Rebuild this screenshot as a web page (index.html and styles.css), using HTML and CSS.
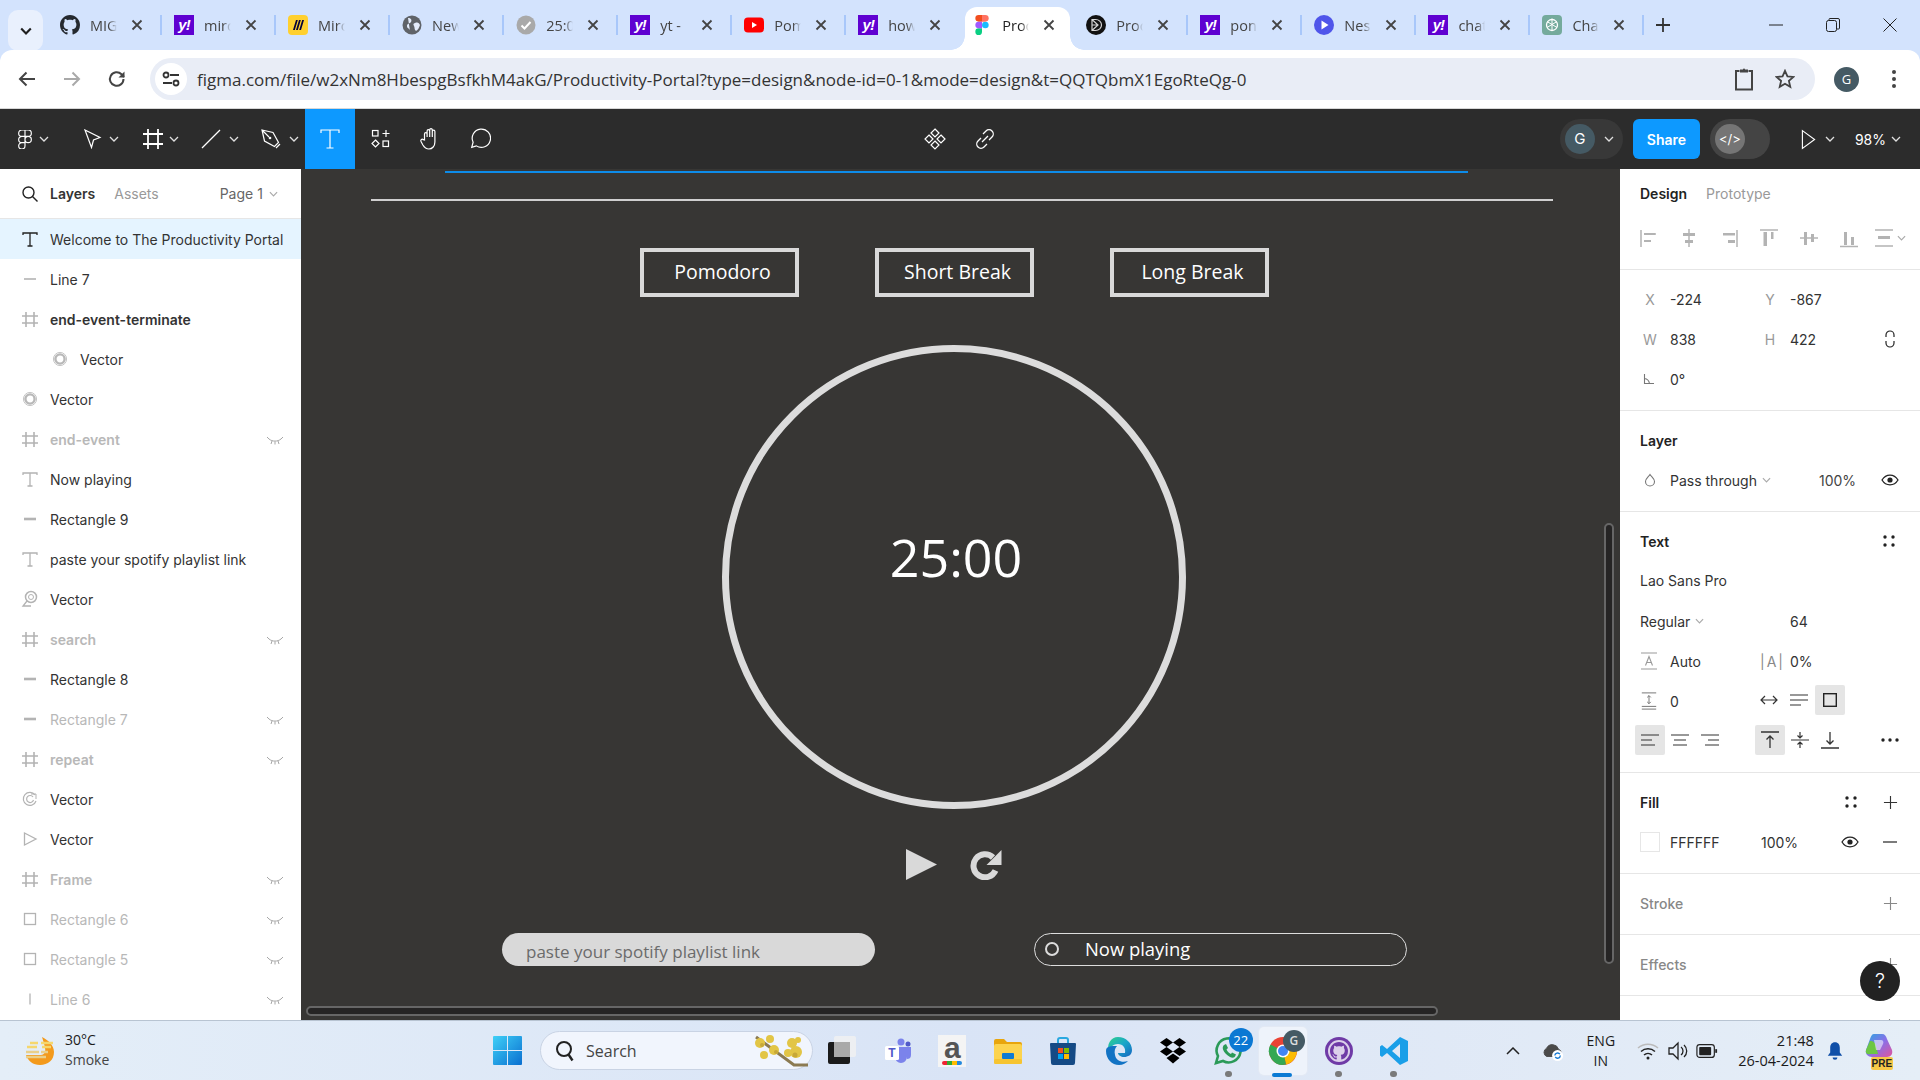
FILE: index.html
```html
<!DOCTYPE html>
<html lang="en">
<head>
<meta charset="utf-8">
<title>Productivity Portal – Figma</title>
<link rel="stylesheet" href="styles.css">
</head>
<body>
<svg class="defs" width="0" height="0" aria-hidden="true">
  <symbol id="x" viewBox="0 0 12 12"><path d="M1.500 1.500l9 9M10.500 1.500l-9 9" fill="none" stroke="currentColor" stroke-width="1.800"/></symbol>
  <symbol id="gh" viewBox="0 0 16 16"><path d="M8 0C3.58 0 0 3.58 0 8c0 3.54 2.29 6.53 5.47 7.59.4.07.55-.17.55-.38 0-.19-.01-.82-.01-1.49-2.01.37-2.53-.49-2.69-.94-.09-.23-.48-.94-.82-1.13-.28-.15-.68-.52-.01-.53.63-.01 1.08.58 1.23.82.72 1.21 1.87.87 2.33.66.07-.52.28-.87.51-1.07-1.78-.2-3.64-.89-3.64-3.95 0-.87.31-1.59.82-2.15-.08-.2-.36-1.02.08-2.12 0 0 .67-.21 2.2.82.64-.18 1.32-.27 2-.27.68 0 1.36.09 2 .27 1.53-1.04 2.2-.82 2.2-.82.44 1.1.16 1.92.08 2.12.51.56.82 1.27.82 2.15 0 3.07-1.87 3.75-3.65 3.95.29.25.54.73.54 1.48 0 1.07-.01 1.93-.01 2.2 0 .21.15.46.55.38A8.013 8.013 0 0016 8c0-4.42-3.58-8-8-8z" fill="currentColor"/></symbol>
  <symbol id="chev" viewBox="0 0 10 6"><path d="M1 1l4 4 4-4" fill="none" stroke="currentColor" stroke-width="1.300"/></symbol>
  <symbol id="eye-off" viewBox="0 0 18 10"><path d="M3 3c3.400 2.800 8.600 2.800 12 0M1 1l2 2M17 1l-2 2M6 5l-1 3M12 5l1 3M9 5.500v3" fill="none" stroke="#a6a6a6" stroke-width="1"/></symbol>
  <symbol id="hash" viewBox="0 0 20 20"><path d="M6 3v15M14 3v15M2 7h16M2 14h16" fill="none" stroke="#b3b3b3" stroke-width="1.600"/></symbol>
  <symbol id="ltext" viewBox="0 0 20 20"><path d="M3 6V4h14v2M10 4v13M7.500 17h5" fill="none" stroke="#b3b3b3" stroke-width="1.300"/></symbol>
  <symbol id="ltext-d" viewBox="0 0 20 20"><path d="M3 6V4h14v2M10 4v13M7.500 17h5" fill="none" stroke="#222" stroke-width="1.300"/></symbol>
  <symbol id="ldash" viewBox="0 0 20 20"><path d="M4 10h12" stroke="#b3b3b3" stroke-width="1.600"/></symbol>
  <symbol id="lbar" viewBox="0 0 20 20"><path d="M4 10h12" stroke="#b3b3b3" stroke-width="2.600"/></symbol>
  <symbol id="lring" viewBox="0 0 20 20"><circle cx="10" cy="10" r="4.600" fill="none" stroke="#b8b8b8" stroke-width="2.400"/><circle cx="10" cy="10" r="6.600" fill="none" stroke="#c6c6c6" stroke-width="1"/></symbol>
  <symbol id="lbox" viewBox="0 0 20 20"><rect x="4.500" y="4.500" width="11" height="11" fill="none" stroke="#b3b3b3" stroke-width="1.300"/></symbol>
  <symbol id="eye" viewBox="0 0 18 12"><path d="M1 6c4-6.500 12-6.500 16 0-4 6.500-12 6.500-16 0z" fill="none" stroke="#222" stroke-width="1.300"/><circle cx="9" cy="6" r="2.600" fill="#222"/></symbol>
  <symbol id="plus" viewBox="0 0 16 16"><path d="M8 1v14M1 8h14" stroke="currentColor" stroke-width="1.200"/></symbol>
  <symbol id="dots4" viewBox="0 0 12 12"><circle cx="2" cy="2" r="1.700"/><circle cx="10" cy="2" r="1.700"/><circle cx="2" cy="10" r="1.700"/><circle cx="10" cy="10" r="1.700"/></symbol>
</svg>

<header class="tabbar">
  <button class="tab-list"><svg class="tab-list-ic" viewBox="0 0 10 6"><path d="M1 1l4 4 4-4" fill="none" stroke="#1f1f1f" stroke-width="1.800"/></svg></button>
  <div class="tabs">
    <div class="tab sep"><svg class="fav dark"><use href="#gh"/></svg><span class="tab-t">MIG</span><svg class="tab-x"><use href="#x"/></svg></div>
    <div class="tab sep"><span class="fav yahoo">y!</span><span class="tab-t">mirc</span><svg class="tab-x"><use href="#x"/></svg></div>
    <div class="tab sep"><svg class="fav" viewBox="0 0 20 20"><rect width="20" height="20" rx="4" fill="#ffd02f"/><path d="M8 5l-3 10h1.800l3-10zM11 5l-3 10h1.800l3-10zM14.200 5l-3 10H13l3-10z" fill="#050038"/></svg><span class="tab-t">Mirc</span><svg class="tab-x"><use href="#x"/></svg></div>
    <div class="tab sep"><svg class="fav" viewBox="0 0 20 20"><circle cx="10" cy="10" r="9.500" fill="#5f6368"/><path d="M6 3c3 0 4 2 3 4S5 8 5 11s3 2 3 5M13 8c3-1 4 0 5 2-1 3-2 5-4 6-2-2-1-3-2-5s-1-2 1-3z" fill="#e4ecfb"/></svg><span class="tab-t">New</span><svg class="tab-x"><use href="#x"/></svg></div>
    <div class="tab sep"><svg class="fav" viewBox="0 0 20 20"><circle cx="10" cy="10" r="9.500" fill="#a9a9a9"/><path d="M5.500 10.500l3 3 6-6.500" fill="none" stroke="#fff" stroke-width="2"/></svg><span class="tab-t">25:0</span><svg class="tab-x"><use href="#x"/></svg></div>
    <div class="tab sep"><span class="fav yahoo">y!</span><span class="tab-t">yt -</span><svg class="tab-x"><use href="#x"/></svg></div>
    <div class="tab sep"><svg class="fav" viewBox="0 0 20 20"><rect y="2.500" width="20" height="15" rx="4" fill="#f00"/><path d="M8 7l5 3-5 3z" fill="#fff"/></svg><span class="tab-t">Pom</span><svg class="tab-x"><use href="#x"/></svg></div>
    <div class="tab"><span class="fav yahoo">y!</span><span class="tab-t">how</span><svg class="tab-x"><use href="#x"/></svg></div>
    <div class="tab active"><svg class="fav" viewBox="0 0 38 57"><path fill="#1abcfe" d="M19 28.500a9.500 9.500 0 1 1 19 0 9.500 9.500 0 0 1-19 0z"/><path fill="#0acf83" d="M0 47.500A9.500 9.500 0 0 1 9.500 38H19v9.500a9.500 9.500 0 1 1-19 0z"/><path fill="#ff7262" d="M19 0v19h9.500a9.500 9.500 0 1 0 0-19H19z"/><path fill="#f24e1e" d="M0 9.500A9.500 9.500 0 0 0 9.500 19H19V0H9.500A9.500 9.500 0 0 0 0 9.500z"/><path fill="#a259ff" d="M0 28.500A9.500 9.500 0 0 0 9.500 38H19V19H9.500A9.500 9.500 0 0 0 0 28.500z"/></svg><span class="tab-t">Proc</span><svg class="tab-x"><use href="#x"/></svg></div>
    <div class="tab sep"><svg class="fav" viewBox="0 0 20 20"><circle cx="10" cy="10" r="10" fill="#111"/><path d="M6 4.500h3.500C13 4.500 15.500 7 15.500 10S13 15.500 9.500 15.500H6zM6 4.500L12 10l-6 5.500M6 10h6" fill="none" stroke="#d5d5d5" stroke-width="1.200"/></svg><span class="tab-t">Proc</span><svg class="tab-x"><use href="#x"/></svg></div>
    <div class="tab sep"><span class="fav yahoo">y!</span><span class="tab-t">pon</span><svg class="tab-x"><use href="#x"/></svg></div>
    <div class="tab sep"><svg class="fav" viewBox="0 0 20 20"><circle cx="10" cy="10" r="10" fill="#4f55ea"/><path d="M7.500 5.500l7 4.500-7 4.500z" fill="#fff"/></svg><span class="tab-t">Nes</span><svg class="tab-x"><use href="#x"/></svg></div>
    <div class="tab sep"><span class="fav yahoo">y!</span><span class="tab-t">chat</span><svg class="tab-x"><use href="#x"/></svg></div>
    <div class="tab sep"><svg class="fav" viewBox="0 0 20 20"><rect width="20" height="20" rx="4" fill="#74aa9c"/><circle cx="10" cy="10" r="5.500" fill="none" stroke="#fff" stroke-width="1.300"/><path d="M10 3.500v6l5 3M5 6.500l5 3v6M15 6.500l-5 3-5 3" fill="none" stroke="#fff" stroke-width="1"/></svg><span class="tab-t">Cha</span><svg class="tab-x"><use href="#x"/></svg></div>
  </div>
  <svg class="new-tab" viewBox="0 0 14 14"><path d="M7 0v14M0 7h14" stroke="#333" stroke-width="1.800"/></svg>
  <div class="win-ctrls">
    <svg class="win-ic" viewBox="0 0 14 14"><path d="M0 7h14" stroke="#222" stroke-width="1"/></svg>
    <svg class="win-ic" viewBox="0 0 14 14"><rect x=".5" y="2.500" width="10" height="11" rx="2" fill="none" stroke="#222"/><path d="M3 2.500v-1a1 1 0 0 1 1-1h8a1.500 1.500 0 0 1 1.500 1.500v8a1 1 0 0 1-1 1h-2" fill="none" stroke="#222"/></svg>
    <svg class="win-ic" viewBox="0 0 14 14"><path d="M.5.500l13 13M13.500.500l-13 13" stroke="#222" stroke-width="1"/></svg>
  </div>
</header>

<nav class="addrbar">
  <svg class="nav-ic" viewBox="0 0 20 20"><path d="M18 10H3M9.500 3.500L3 10l6.500 6.500" fill="none" stroke="#444" stroke-width="2"/></svg>
  <svg class="nav-ic" viewBox="0 0 20 20"><path d="M2 10h15M10.500 3.500L17 10l-6.500 6.500" fill="none" stroke="#a9a9a9" stroke-width="2"/></svg>
  <svg class="nav-ic" viewBox="0 0 20 20"><path d="M16.500 10a6.800 6.800 0 1 1-2-4.800L17 8" fill="none" stroke="#444" stroke-width="2"/><path d="M17.500 2.500v6h-6z" fill="#444"/></svg>
  <div class="url">
    <span class="site-ic"><svg viewBox="0 0 18 18" width="18" height="18"><path d="M8 5h9M1 13h9" stroke="#333" stroke-width="1.800"/><circle cx="4" cy="5" r="2.500" fill="none" stroke="#333" stroke-width="1.800"/><circle cx="14" cy="13" r="2.500" fill="none" stroke="#333" stroke-width="1.800"/></svg></span>
    <span class="url-t">figma.com/file/w2xNm8HbespgBsfkhM4akG/Productivity-Portal?type=design&amp;node-id=0-1&amp;mode=design&amp;t=QQTQbmX1EgoRteQg-0</span>
    <svg class="clip-ic" viewBox="0 0 20 24"><path d="M5.500 4H2v18.500h16V4h-3.500" fill="none" stroke="#444" stroke-width="2"/><path d="M6 5.500V2.500h3a1 1 0 0 1 2 0h3v3z" fill="#444"/></svg>
    <svg class="star-ic" viewBox="0 0 22 22"><path d="M11 2l2.700 6.100 6.600.6-5 4.400 1.500 6.500L11 16.200l-5.800 3.400 1.500-6.500-5-4.400 6.600-.6z" fill="none" stroke="#444" stroke-width="2"/></svg>
  </div>
  <span class="avatar-g">G</span>
  <svg class="kebab" viewBox="0 0 4 18"><circle cx="2" cy="2" r="2" fill="#444"/><circle cx="2" cy="9" r="2" fill="#444"/><circle cx="2" cy="16" r="2" fill="#444"/></svg>
</nav>

<div class="toolbar">
  <div class="tb-tools">
    <div class="tool w-fig"><svg class="ic-fig" viewBox="0 0 38 57"><path fill="none" stroke="#fff" stroke-width="3.500" d="M19 28.500a9.500 9.500 0 1 1 19 0 9.500 9.500 0 0 1-19 0zM0 47.500A9.500 9.500 0 0 1 9.500 38H19v9.500a9.500 9.500 0 1 1-19 0zM19 0v19h9.500a9.500 9.500 0 1 0 0-19H19zM0 9.500A9.500 9.500 0 0 0 9.500 19H19V0H9.500A9.500 9.500 0 0 0 0 9.500zM0 28.500A9.500 9.500 0 0 0 9.500 38H19V19H9.500A9.500 9.500 0 0 0 0 28.500z"/></svg><svg class="tchev"><use href="#chev"/></svg></div>
    <div class="tool w-move"><svg class="ic20" viewBox="0 0 20 20"><path d="M3 1l15 7.500-6.500 2.500-2 7.500z" fill="none" stroke="#fff" stroke-width="1.200"/></svg><svg class="tchev"><use href="#chev"/></svg></div>
    <div class="tool w-frame"><svg class="ic20" viewBox="0 0 20 20"><path d="M5 0v20M15 0v20M0 5h20M0 15h20" stroke="#fff" stroke-width="1.800" fill="none"/></svg><svg class="tchev"><use href="#chev"/></svg></div>
    <div class="tool w-line"><svg class="ic20" viewBox="0 0 20 20"><path d="M1 19L19 1" stroke="#fff" stroke-width="1.200"/></svg><svg class="tchev"><use href="#chev"/></svg></div>
    <div class="tool w-pen"><svg class="ic20" viewBox="0 0 20 20"><path d="M1 1l11 2.500 5.500 10-4 4-10-5.500zM1 1l7 7M19 15l-4 4" fill="none" stroke="#fff" stroke-width="1.200"/><circle cx="9" cy="9" r="1.300" fill="#fff"/></svg><svg class="tchev"><use href="#chev"/></svg></div>
    <div class="tool-text"><svg class="ic20" viewBox="0 0 20 20"><path d="M1 4V1h18v3M10 1v18M6.500 19h7" fill="none" stroke="#fff" stroke-width="1.200"/></svg></div>
    <div class="tool w-res"><svg class="ic20" viewBox="0 0 20 20"><rect x="1.500" y="1.500" width="5.500" height="5.500" fill="none" stroke="#fff" stroke-width="1.200"/><path d="M15 1v7M11.500 4.500h7" stroke="#fff" stroke-width="1.200"/><path d="M4.500 11l3.500 3.500-3.500 3.500L1 14.500z" fill="none" stroke="#fff" stroke-width="1.200"/><rect x="12" y="12" width="5.500" height="5.500" fill="none" stroke="#fff" stroke-width="1.200"/></svg></div>
    <div class="tool w-hand"><svg class="ic24" viewBox="0 0 24 24"><path d="M6.500 13V7a1.300 1.300 0 0 1 2.600 0v3-6a1.300 1.300 0 0 1 2.600 0v6-7a1.300 1.300 0 0 1 2.600 0v7-5.500a1.300 1.300 0 0 1 2.600 0v10.500c0 4-2.500 7-6 7-3 0-4.500-1.500-6-4L3 14.500c-.8-1.500 1-3 2.300-1.800z" fill="none" stroke="#fff" stroke-width="1.200"/></svg></div>
    <div class="tool w-comment"><svg class="ic22" viewBox="0 0 24 24"><path d="M3 21l1.500-5.500A10 10 0 1 1 8 19.500z" fill="none" stroke="#fff" stroke-width="1.300"/></svg></div>
  </div>
  <div class="tb-center">
    <svg class="ic24" viewBox="0 0 24 24"><path d="M12 1l4 4-4 4-4-4zM6 7l4 4-4 4-4-4zM18 7l4 4-4 4-4-4zM12 13l4 4-4 4-4-4z" transform="translate(0 1)" fill="none" stroke="#fff" stroke-width="1.200"/></svg>
    <svg class="ic20 link-ic" viewBox="0 0 20 20"><path d="M8 5l3-3a4 4 0 0 1 6 6l-3 3M12 15l-3 3a4 4 0 0 1-6-6l3-3M7 13l6-6" fill="none" stroke="#fff" stroke-width="1.300"/></svg>
  </div>
  <div class="tb-right">
    <div class="user-pill"><span class="user-av">G</span><svg class="tchev"><use href="#chev"/></svg></div>
    <button class="share">Share</button>
    <div class="dev-toggle"><span class="dev-knob">&lt;/&gt;</span></div>
    <svg class="play-ic" viewBox="0 0 16 22"><path d="M1.500 1.500L14.500 11 1.500 20.500z" fill="none" stroke="#fff" stroke-width="1.200"/></svg>
    <svg class="tchev"><use href="#chev"/></svg>
    <span class="zoom-val">98%</span>
    <svg class="tchev"><use href="#chev"/></svg>
  </div>
</div>

<main class="main">
  <aside class="left">
    <div class="left-head">
      <svg class="ic16" viewBox="0 0 16 16"><circle cx="6.500" cy="6.500" r="5.500" fill="none" stroke="#222" stroke-width="1.400"/><path d="M10.500 10.500L15.500 15.500" stroke="#222" stroke-width="1.400"/></svg>
      <span class="lh-active">Layers</span>
      <span class="lh-muted">Assets</span>
      <span class="lh-page">Page 1</span>
      <svg class="pchev"><use href="#chev"/></svg>
    </div>
    <ul class="layers">
      <li class="row sel"><svg class="lic"><use href="#ltext-d"/></svg>Welcome to The Productivity Portal</li>
      <li class="row"><svg class="lic"><use href="#ldash"/></svg>Line 7</li>
      <li class="row strong"><svg class="lic"><use href="#hash"/></svg>end-event-terminate</li>
      <li class="row nested"><svg class="lic"><use href="#lring"/></svg>Vector</li>
      <li class="row"><svg class="lic"><use href="#lring"/></svg>Vector</li>
      <li class="row hid strong"><svg class="lic"><use href="#hash"/></svg>end-event<svg class="eye-off"><use href="#eye-off"/></svg></li>
      <li class="row"><svg class="lic"><use href="#ltext"/></svg>Now playing</li>
      <li class="row"><svg class="lic"><use href="#lbar"/></svg>Rectangle 9</li>
      <li class="row"><svg class="lic"><use href="#ltext"/></svg>paste your spotify playlist link</li>
      <li class="row"><svg class="lic" viewBox="0 0 20 20"><circle cx="11" cy="8" r="5.500" fill="none" stroke="#b3b3b3" stroke-width="1.500"/><circle cx="11" cy="8" r="2.500" fill="none" stroke="#b3b3b3"/><path d="M7 12l-4 5h8" fill="none" stroke="#b3b3b3" stroke-width="1.300"/></svg>Vector</li>
      <li class="row hid strong"><svg class="lic"><use href="#hash"/></svg>search<svg class="eye-off"><use href="#eye-off"/></svg></li>
      <li class="row"><svg class="lic"><use href="#lbar"/></svg>Rectangle 8</li>
      <li class="row hid"><svg class="lic"><use href="#lbar"/></svg>Rectangle 7<svg class="eye-off"><use href="#eye-off"/></svg></li>
      <li class="row hid strong"><svg class="lic"><use href="#hash"/></svg>repeat<svg class="eye-off"><use href="#eye-off"/></svg></li>
      <li class="row"><svg class="lic" viewBox="0 0 20 20"><path d="M15 6a6.500 6.500 0 1 0 1 6M13 8a3.500 3.500 0 1 0 .5 3" fill="none" stroke="#b3b3b3" stroke-width="1.200"/><path d="M11 5l5 0 0 5" fill="none" stroke="#b3b3b3" stroke-width="1"/></svg>Vector</li>
      <li class="row"><svg class="lic" viewBox="0 0 20 20"><path d="M4.500 4l11.500 6-11.500 6z" fill="none" stroke="#b3b3b3" stroke-width="1.300"/></svg>Vector</li>
      <li class="row hid strong"><svg class="lic"><use href="#hash"/></svg>Frame<svg class="eye-off"><use href="#eye-off"/></svg></li>
      <li class="row hid"><svg class="lic"><use href="#lbox"/></svg>Rectangle 6<svg class="eye-off"><use href="#eye-off"/></svg></li>
      <li class="row hid"><svg class="lic"><use href="#lbox"/></svg>Rectangle 5<svg class="eye-off"><use href="#eye-off"/></svg></li>
      <li class="row hid"><svg class="lic" viewBox="0 0 20 20"><path d="M10 4.500v11" stroke="#b3b3b3" stroke-width="1.300"/></svg>Line 6<svg class="eye-off"><use href="#eye-off"/></svg></li>
    </ul>
  </aside>

  <section class="canvas">
    <div class="c-blue"></div>
    <div class="c-rule"></div>
    <div class="c-modes">
      <span class="c-mode">Pomodoro</span>
      <span class="c-mode">Short Break</span>
      <span class="c-mode">Long Break</span>
    </div>
    <div class="c-ring"></div>
    <div class="c-time">25:00</div>
    <svg class="c-play" viewBox="0 0 31 31"><path d="M0 0l31 15.500L0 31z" fill="#d9d9d9"/></svg>
    <svg class="c-repeat" viewBox="0 0 33 30"><path d="M26.500 20.500A11.500 11.500 0 1 1 24 7.500" fill="none" stroke="#d9d9d9" stroke-width="6"/><path d="M32.500 0v15h-15z" fill="#d9d9d9"/></svg>
    <div class="c-input">paste your spotify playlist link</div>
    <div class="c-now"><span class="c-now-dot"></span>Now playing</div>
    <div class="c-vscroll"></div>
    <div class="c-hscroll"></div>
  </section>

  <aside class="right">
    <div class="sec sec-head">
      <div class="rt-tabs"><span class="rt-active">Design</span><span class="rt-muted">Prototype</span></div>
      <div class="aligns">
        <svg class="al" viewBox="0 0 20 20"><path d="M2 2v17M5 6h12M5 13h7" fill="none" stroke="#b3b3b3" stroke-width="1.500"/><path d="M5 5v2h11V5zM5 12v2h7v-2z" fill="#b3b3b3"/></svg>
        <svg class="al" viewBox="0 0 20 20"><path d="M10 1v18" stroke="#b3b3b3" stroke-width="1.500"/><path d="M4 5h12v3H4zM6 12h8v3H6z" fill="#b3b3b3"/></svg>
        <svg class="al" viewBox="0 0 20 20"><path d="M18 2v17" stroke="#b3b3b3" stroke-width="1.500"/><path d="M4 5h12v2.500H4zM9 12h7v3H9z" fill="#b3b3b3"/></svg>
        <svg class="al" viewBox="0 0 20 20"><path d="M1 2h18" stroke="#b3b3b3" stroke-width="1.500"/><path d="M4.500 4H8v14H4.500zM12 4h2.500v7H12z" fill="#b3b3b3"/></svg>
        <svg class="al" viewBox="0 0 20 20"><path d="M1 10h18" stroke="#b3b3b3" stroke-width="1.500"/><path d="M5 4h3v13H5zM12 6h3v8h-3z" fill="#b3b3b3"/></svg>
        <svg class="al" viewBox="0 0 20 20"><path d="M1 18.500h18" stroke="#b3b3b3" stroke-width="1.500"/><path d="M5 4h3v13H5zM12 9h3v8h-3z" fill="#b3b3b3"/></svg>
        <svg class="al" viewBox="0 0 20 20"><path d="M1 2h18M1 18h18" stroke="#b3b3b3" stroke-width="1.500"/><path d="M4 8h12v3H4z" fill="#b3b3b3"/></svg>
        <svg class="pchev al-chev"><use href="#chev"/></svg>
      </div>
    </div>

    <div class="sec sec-geo">
      <div class="pr"><span class="lbl">X</span><span>-224</span><span class="lbl">Y</span><span>-867</span></div>
      <div class="pr"><span class="lbl">W</span><span>838</span><span class="lbl">H</span><span>422</span><span></span><svg class="ic-con" viewBox="0 0 10 18"><path d="M1 7V5a4 4 0 0 1 8 0v2M1 11v2a4 4 0 0 0 8 0v-2" fill="none" stroke="#222" stroke-width="1.200"/></svg></div>
      <div class="pr"><svg class="ic-ang" viewBox="0 0 12 12"><path d="M1.500 1v9.500H11M1.500 5.500c2.500.3 4.500 2.300 5 5" fill="none" stroke="#777" stroke-width="1.100"/></svg><span>0°</span></div>
    </div>

    <div class="sec sec-pad">
      <div class="pr-title"><strong>Layer</strong></div>
      <div class="pr">
        <svg class="ic-drop" viewBox="0 0 12 14"><path d="M6 1.500C4.500 4 1.500 5.800 1.500 8.500a4.500 4.500 0 0 0 9 0C10.500 5.800 7.500 4 6 1.500z" fill="none" stroke="#777" stroke-width="1.100"/></svg>
        <span class="span-blend">Pass through<svg class="pchev blend-chev"><use href="#chev"/></svg></span>
        <span class="pct-layer">100%</span>
        <svg class="ic-eye eye-layer"><use href="#eye"/></svg>
      </div>
    </div>

    <div class="sec sec-text">
      <div class="pr-title"><strong>Text</strong><svg class="ic-dots"><use href="#dots4"/></svg></div>
      <div class="pr-title pr-font-name">Lao Sans Pro</div>
      <div class="pr pr-font"><span class="font-wt">Regular<svg class="pchev blend-chev"><use href="#chev"/></svg></span><span class="font-size">64</span></div>
      <div class="pr">
        <svg class="ic18" viewBox="0 0 18 18"><path d="M1 1h16M1 17h16M5.500 13.500L9 4.500l3.500 9M6.700 10.500h4.600" fill="none" stroke="#999" stroke-width="1.100"/></svg><span>Auto</span>
        <span class="ic-ls">|A|</span><span>0%</span>
      </div>
      <div class="pr">
        <svg class="ic18" viewBox="0 0 18 20"><path d="M1 1h16M1 16h16M1 19h16M9 4v9M7 6l2-2 2 2M7 11l2 2 2-2" fill="none" stroke="#777" stroke-width="1.100"/></svg><span>0</span>
        <svg class="ic18 resize-first" viewBox="0 0 18 12"><path d="M1 6h16M5 2L1 6l4 4M13 2l4 4-4 4" fill="none" stroke="#333" stroke-width="1.200"/></svg>
        <div class="resize-group">
          <svg class="ic18" viewBox="0 0 18 12"><path d="M0 1h18M0 6h18M0 11h11" fill="none" stroke="#333" stroke-width="1.200"/></svg>
          <span class="toggle-on"><svg class="ic14" viewBox="0 0 14 14"><rect x=".7" y=".7" width="12.600" height="12.600" fill="none" stroke="#222" stroke-width="1.400"/></svg></span>
        </div>
      </div>
      <div class="pr-aligns">
        <span class="cell on"><svg class="ic18" viewBox="0 0 18 12"><path d="M0 1h18M0 6h11M0 11h14" fill="none" stroke="#333" stroke-width="1.200"/></svg></span>
        <span class="cell"><svg class="ic18" viewBox="0 0 18 12"><path d="M0 1h18M3 6h12M2 11h14" fill="none" stroke="#333" stroke-width="1.200"/></svg></span>
        <span class="cell"><svg class="ic18" viewBox="0 0 18 12"><path d="M0 1h18M7 6h11M4 11h14" fill="none" stroke="#333" stroke-width="1.200"/></svg></span>
        <span class="cell-gap"></span>
        <span class="cell on"><svg class="ic18 tall" viewBox="0 0 18 18"><path d="M0 1h18M9 17V5M5.500 8.500L9 5l3.500 3.500" fill="none" stroke="#333" stroke-width="1.300"/></svg></span>
        <span class="cell"><svg class="ic18 tall" viewBox="0 0 18 18"><path d="M0 9h18M9 1v6M6.500 4.500L9 7l2.500-2.500M9 17v-6M6.500 13.500L9 11l2.500 2.500" fill="none" stroke="#333" stroke-width="1.200"/></svg></span>
        <span class="cell"><svg class="ic18 tall" viewBox="0 0 18 18"><path d="M0 17h18M9 1v12M5.500 9.500L9 13l3.500-3.500" fill="none" stroke="#333" stroke-width="1.300"/></svg></span>
        <svg class="ic-more" viewBox="0 0 18 4"><circle cx="2" cy="2" r="1.700"/><circle cx="9" cy="2" r="1.700"/><circle cx="16" cy="2" r="1.700"/></svg>
      </div>
    </div>

    <div class="sec sec-pad">
      <div class="pr-title"><strong>Fill</strong><span class="title-tools"><svg class="ic-dots"><use href="#dots4"/></svg><svg class="ic-plus"><use href="#plus"/></svg></span></div>
      <div class="pr pr-fill">
        <span class="swatch"></span><span class="fill-hex">FFFFFF</span><span class="fill-pct">100%</span>
        <svg class="ic-eye"><use href="#eye"/></svg>
        <svg class="ic-minus" viewBox="0 0 14 2"><path d="M0 1h14" stroke="#222" stroke-width="1.200"/></svg>
      </div>
    </div>
    <div class="sec sec-one"><div class="pr-title muted">Stroke<svg class="ic-plus grey"><use href="#plus"/></svg></div></div>
    <div class="sec sec-one"><div class="pr-title muted">Effects<svg class="ic-plus grey"><use href="#plus"/></svg></div></div>
    <div class="sec-last"><svg class="ic-plus grey"><use href="#plus"/></svg></div>
    <div class="help">?</div>
  </aside>
</main>

<footer class="taskbar">
  <div class="tk-left">
    <svg class="weather" viewBox="0 0 30 28"><path d="M17 0c6 3 12 8 12 15 0 8-6 13-14 13C8 28 3 24 1 18h15c3 0 5-3 4-7-.6-4-2-8-3-11z" fill="#f39a1c"/><path d="M5 6h8M2 10h10M16 6h12M17 10h9" stroke="#f5d76e" stroke-width="2.500"/><path d="M1 15h13M1 20h20M16 15h7" stroke="#e9d08a" stroke-width="2.500"/></svg>
    <div class="weather-t"><span class="w1">30°C</span><span class="w2">Smoke</span></div>
  </div>
  <svg class="winlogo" viewBox="0 0 29 29">
    <defs><linearGradient id="wg" x1="0" y1="0" x2="1" y2="1"><stop offset="0" stop-color="#3fd0f7"/><stop offset="1" stop-color="#0a6fd0"/></linearGradient></defs>
    <path d="M1 0h13v14H0V1a1 1 0 0 1 1-1zM15 0h13a1 1 0 0 1 1 1v13H15zM0 15h14v14H1a1 1 0 0 1-1-1zM15 15h14v13a1 1 0 0 1-1 1H15z" fill="url(#wg)"/>
  </svg>
  <div class="tk-search">
    <svg class="s-ic" viewBox="0 0 20 22"><circle cx="9" cy="9" r="7" fill="none" stroke="#222" stroke-width="2"/><path d="M13.500 14.500l4 6" stroke="#222" stroke-width="2.400"/></svg>
    <span class="s-t">Search</span>
    <svg class="s-flower" viewBox="0 0 60 36"><path d="M6 4l38 28h14" fill="none" stroke="#8b7a52" stroke-width="3"/><g fill="#e2c546"><circle cx="10" cy="10" r="5"/><circle cx="20" cy="6" r="4"/><circle cx="24" cy="17" r="5"/><circle cx="14" cy="22" r="4"/><circle cx="42" cy="10" r="5"/><circle cx="46" cy="19" r="6"/><circle cx="38" cy="20" r="4"/><circle cx="48" cy="7" r="3"/></g><g fill="#c7a838"><circle cx="12" cy="12" r="2"/><circle cx="26" cy="19" r="2"/><circle cx="45" cy="22" r="2.500"/></g></svg>
  </div>
  <div class="apps">
    <span class="app"><svg class="ic-app" viewBox="0 0 30 30"><rect x="1" y="6" width="22" height="22" rx="2" fill="#1b1b1b"/><rect x="7" y="0" width="22" height="21" rx="2" fill="#f1f1f1" fill-opacity=".8"/><rect x="7" y="6" width="16" height="15" fill="#a9a9a9"/></svg></span>
    <span class="app"><svg class="ic-app" viewBox="0 0 30 30"><circle cx="19" cy="6" r="3.500" fill="#7b83eb"/><circle cx="26" cy="8" r="2.500" fill="#5059c9"/><path d="M13 11h12v10a6 6 0 0 1-12 0zM25 11h4v8c0 3-2 4-4 4z" fill="#7b83eb"/><rect x="3" y="10" width="14" height="14" rx="1.500" fill="#fff"/><text x="10" y="21" class="svg-t teams-t">T</text></svg></span>
    <span class="app"><span class="amz">a<span class="amz-dots"></span></span></span>
    <span class="app"><svg class="ic-app" viewBox="0 0 30 30"><path d="M1 5a2 2 0 0 1 2-2h8l3 3h13a2 2 0 0 1 2 2v4H1z" fill="#e8a50c"/><rect x="1" y="8" width="28" height="20" rx="2" fill="#fcd34d"/><rect x="9" y="17" width="12" height="6" rx="1" fill="#0e7bd4"/><rect x="1" y="23" width="28" height="5" rx="1.500" fill="#f6c431"/></svg></span>
    <span class="app"><svg class="ic-app" viewBox="0 0 30 30"><path d="M10 7V4a2 2 0 0 1 2-2h6a2 2 0 0 1 2 2v3" fill="none" stroke="#29a8e0" stroke-width="2"/><path d="M3 7h24a1 1 0 0 1 1 1l-1 19a2 2 0 0 1-2 2H5a2 2 0 0 1-2-2L2 8a1 1 0 0 1 1-1z" fill="#154a85"/><rect x="10" y="12" width="5" height="5" fill="#f25022"/><rect x="16" y="12" width="5" height="5" fill="#7fba00"/><rect x="10" y="18" width="5" height="5" fill="#00a4ef"/><rect x="16" y="18" width="5" height="5" fill="#ffb900"/></svg></span>
    <span class="app"><svg class="ic-app" viewBox="0 0 30 30"><defs><linearGradient id="eg" x1="0" y1="0" x2="1" y2="1"><stop offset="0" stop-color="#2fd18b"/><stop offset=".5" stop-color="#19a6c9"/><stop offset="1" stop-color="#1565c0"/></linearGradient></defs><path d="M15 1c8 0 14 6 14 13 0 5-4 7-8 7-3 0-6-2-6-4h7c1-5-2-9-7-9-6 0-9 5-9 9C3 8 8 1 15 1z" fill="url(#eg)"/><path d="M3 15c0 8 6 14 13 14 4 0 7-2 9-4-6 2-12 0-13-6-1-4 0-7 2-9-6 0-11 0-11 5z" fill="#1273c4"/></svg></span>
    <span class="app"><svg class="ic-app" viewBox="0 0 30 30"><path d="M8.500 2l6.500 4.500L8.500 11 2 6.500zM21.500 2L28 6.500 21.500 11 15 6.500zM8.500 11L15 15.500 8.500 20 2 15.500zM21.500 11L28 15.500 21.500 20 15 15.500zM15 17.500l6.500 4.500-6.500 5.500L8.500 22z" fill="#000"/></svg></span>
    <span class="app app-wa"><svg class="ic-app" viewBox="0 0 30 30"><path d="M3 27l2-7a12 12 0 1 1 5 5z" fill="none" stroke="#2b9a58" stroke-width="2.600"/><path d="M11 9l2-1 2 4-1.500 1.500c1 2 2.500 3.500 4.500 4.500L19 16.500l4 2-1 2c-1 1.500-3 1.500-5 .5-3-1.500-6-4.500-7-7.500-.6-2 0-3.500 1-4.500z" fill="#2b9a58"/></svg><span class="badge">22</span><i class="dot"></i></span>
    <span class="app app-act"><svg class="ic-app" viewBox="0 0 30 30"><circle cx="15" cy="15" r="14" fill="#ea4335"/><path d="M15 15L27 8a14 14 0 0 1-9 20.600z" fill="#fbbc04"/><path d="M15 15L18 28.600A14 14 0 0 1 2.500 8.500z" fill="#34a853"/><circle cx="15" cy="15" r="6.500" fill="#fff"/><circle cx="15" cy="15" r="5" fill="#4285f4"/></svg><span class="g-over">G</span><i class="bar"></i></span>
    <span class="app"><svg class="ic-app" viewBox="0 0 30 30"><circle cx="15" cy="15" r="14" fill="#6f3aa6"/><circle cx="15" cy="15" r="11" fill="#dcd0ea"/><svg x="6" y="6" width="18" height="18" viewBox="0 0 16 16" color="#6f3aa6"><use href="#gh"/></svg></svg><i class="dot"></i></span>
    <span class="app"><svg class="ic-app" viewBox="0 0 30 30"><path d="M21 1l8 4v20l-8 4L8 17l-5 4-2-1.500V10.500L3 9l5 4zM21 8l-8 7 8 7z" fill="#1a9fe8"/></svg><i class="dot"></i></span>
  </div>
  <div class="tray">
    <svg class="tr-caret" viewBox="0 0 14 8"><path d="M1 7l6-6 6 6" fill="none" stroke="#222" stroke-width="1.500"/></svg>
    <svg class="tr-cloud" viewBox="0 0 24 24"><path d="M5 18a5 5 0 0 1 0-9 7 7 0 0 1 13 1 4.500 4.500 0 0 1 1 8z" fill="#4a4a4a" stroke="#4a4a4a"/><circle cx="17" cy="17" r="6" fill="#fff"/><path d="M14 17a3 3 0 0 1 5.500-1.500M20 17a3 3 0 0 1-5.500 1.500" fill="none" stroke="#1479d4" stroke-width="1.500"/></svg>
    <div class="tr-lang"><span>ENG</span><span>IN</span></div>
    <svg class="tr-ic tr-wifi" viewBox="0 0 22 20"><path d="M1 7a15 15 0 0 1 20 0" fill="none" stroke="#bbb" stroke-width="1.500"/><path d="M4 10.500a10.500 10.500 0 0 1 14 0M7 14a6 6 0 0 1 8 0" fill="none" stroke="#222" stroke-width="1.500"/><circle cx="11" cy="17" r="1.500" fill="#222"/></svg>
    <svg class="tr-ic tr-vol" viewBox="0 0 22 20"><path d="M2 7h4l5-5v16l-5-5H2z" fill="none" stroke="#222" stroke-width="1.300"/><path d="M14 6a5 5 0 0 1 0 8M17 4a8 8 0 0 1 0 12" fill="none" stroke="#222" stroke-width="1.300"/></svg>
    <svg class="tr-ic tr-bat" viewBox="0 0 24 20"><rect x="1" y="3" width="19" height="14" rx="3" fill="none" stroke="#222" stroke-width="1.300"/><rect x="3.500" y="5.500" width="13" height="9" rx="1" fill="#222"/><rect x="21" y="8" width="2" height="4" fill="#222"/></svg>
    <div class="tr-clock"><span>21:48</span><span>26-04-2024</span></div>
    <svg class="tr-bell" viewBox="0 0 20 24"><path d="M10 1c4 0 6 3 6 7v6l3 4H1l3-4V8c0-4 2-7 6-7z" fill="#0f4fa8"/><path d="M7 20a3 3 0 0 0 6 0z" fill="#0f4fa8"/></svg>
    <span class="tr-copilot"><svg viewBox="0 0 30 28" width="30" height="28"><defs><linearGradient id="cp" x1="0" y1="0" x2="1" y2="1"><stop offset="0" stop-color="#2aa8e0"/><stop offset=".5" stop-color="#8a6fe8"/><stop offset="1" stop-color="#e0559b"/></linearGradient></defs><path d="M10 0h8c3 0 4 2 5 5l5 11c1 4-1 7-5 7H8c-4 0-7-3-6-7L6 5c1-3 2-5 4-5z" fill="url(#cp)"/><path d="M2 16l4-9c3 0 5 1 6 5l2 8H7c-4 1-6-1-5-4z" fill="#6cc644"/><path d="M10 6h7c2 0 3 2 2 4l-3 6h-4z" fill="#fff" fill-opacity=".55"/></svg><span class="pre">PRE</span></span>
  </div>
</footer>
</body>
</html>
```
FILE: styles.css
```css
* { box-sizing: border-box; }
html, body { margin: 0; padding: 0; }
body { width: 1920px; height: 1080px; overflow: hidden; display: flex; flex-direction: column; font-family: "Inter", "Liberation Sans", sans-serif; background: #d3e3fd; }
.defs { position: absolute; }
button { border: 0; font: inherit; padding: 0; }
ul { list-style: none; margin: 0; padding: 0; }

/* Browser tabs */
.tabbar { height: 50px; background: #d3e3fd; display: flex; align-items: flex-start; flex: none; font-family: "Open Sans", "Noto Sans", sans-serif; }
.tab-list { width: 35px; height: 41px; flex: none; margin: 10px 7px 0 8px; background: #e9f0fd; border-radius: 10px; display: flex; align-items: center; justify-content: center; }
.tab-list-ic { width: 12px; height: 8px; }
.tabs { display: flex; height: 50px; flex: none; }
.tab { position: relative; width: 114.04px; height: 50px; flex: none; display: flex; align-items: center; padding: 0 0 0 10px; color: #444; font-size: 14.5px; }
.tab.sep::after { content: ""; position: absolute; right: 2px; top: 15px; height: 20px; width: 2px; background: #a8c7fa; }
.tab.active { z-index: 1; color: #1f1f1f; }
.tab.active::before { content: ""; position: absolute; left: 3px; right: 6px; top: 7px; bottom: 0; background: #fff; border-radius: 12px 12px 0 0; }
.tab.active::after { content: ""; position: absolute; left: -11px; right: -8px; bottom: 0; height: 14px; z-index: -1; background: radial-gradient(circle 14px at 0 0, #d3e3fd 13.500px, #fff 14px) left bottom / 14px 14px no-repeat, radial-gradient(circle 14px at 100% 0, #d3e3fd 13.500px, #fff 14px) right bottom / 14px 14px no-repeat; }
.tab.active > * { position: relative; }
.fav { width: 20px; height: 20px; flex: none; }
.fav.dark { color: #24292f; }
.yahoo { background: #5f01d1; color: #fff; font: italic 700 15px/20px "Liberation Sans", sans-serif; text-align: center; letter-spacing: -1px; }
.tab-t { width: 27px; margin-left: 10px; overflow: hidden; white-space: nowrap; flex: none; -webkit-mask-image: linear-gradient(90deg, #000 70%, transparent); mask-image: linear-gradient(90deg, #000 70%, transparent); }
.tab-x { width: 12px; height: 12px; margin-left: 14px; color: #444; flex: none; }
.new-tab { width: 14px; height: 14px; margin: 18px 0 0 10px; flex: none; }
.win-ctrls { margin-left: 99px; display: flex; flex: none; }
.win-ic { width: 14px; height: 14px; margin: 18px 43px 0 0; flex: none; }
.win-ic:last-child { margin-right: 0; }

/* Address bar */
.addrbar { height: 58px; background: #fff; border-radius: 12px 12px 0 0; display: flex; align-items: center; flex: none; padding-left: 17px; }
.nav-ic { width: 20px; height: 20px; flex: none; margin-right: 25px; }
.url { height: 42px; width: 1665px; flex: none; margin-left: -2px; background: #e9edf6; border-radius: 21px; display: flex; align-items: center; padding: 0 20px 0 5px; }
.site-ic { width: 32px; height: 32px; border-radius: 50%; background: #fff; display: flex; align-items: center; justify-content: center; flex: none; }
.url-t { margin-left: 10px; font: 17px "Open Sans", "Noto Sans", sans-serif; color: #333; white-space: nowrap; }
.clip-ic { width: 20px; height: 24px; flex: none; margin-left: auto; }
.star-ic { width: 20px; height: 20px; flex: none; margin-left: 21px; }
.avatar-g { width: 25px; height: 25px; border-radius: 50%; background: #455a64; color: #fff; font: 13px/25px "Open Sans", sans-serif; text-align: center; flex: none; margin-left: 19px; }
.kebab { width: 4px; height: 18px; flex: none; margin-left: 33px; }

/* Figma toolbar */
.toolbar { height: 61px; background: #2c2c2c; border-top: 1px solid #d7d7d7; display: flex; align-items: center; flex: none; color: #fff; position: relative; }
.tb-tools { display: flex; align-items: center; height: 60px; }
.tool { display: flex; align-items: center; height: 60px; flex: none; }
.tool svg { flex: none; }
.w-fig { width: 60px; padding-left: 18px; }
.w-fig .tchev { margin-left: 7px; }
.w-move { width: 62px; padding-left: 22px; }
.w-move .tchev { margin-left: 7px; }
.w-frame { width: 60px; padding-left: 21px; }
.w-frame .tchev { margin-left: 6px; }
.w-line { width: 60px; padding-left: 19px; }
.w-line .tchev { margin-left: 8px; }
.w-pen { width: 63px; padding-left: 19px; }
.w-pen .tchev { margin-left: 8px; }
.tool-text { width: 50px; height: 60px; background: #0d99ff; display: flex; align-items: center; justify-content: center; flex: none; }
.w-res, .w-hand, .w-comment { justify-content: center; }
.w-res { width: 52px; }
.w-hand { width: 46px; }
.w-comment { width: 54px; }
.ic-fig { width: 14px; height: 19px; }
.ic20 { width: 20px; height: 20px; }
.ic22 { width: 22px; height: 22px; }
.ic24 { width: 24px; height: 24px; }
.tchev { width: 10px; height: 6px; margin-left: 4px; color: #e0e0e0; flex: none; }
.tb-center { display: flex; align-items: center; margin-left: 416px; }
.link-ic { margin-left: 28px; }
.tb-right { display: flex; align-items: center; margin-left: auto; padding-right: 19px; }
.user-pill { width: 63px; height: 40px; border-radius: 20px; background: #383838; display: flex; align-items: center; padding-left: 5px; }
.user-pill .tchev { margin-left: 9px; }
.user-av { width: 30px; height: 30px; border-radius: 50%; background: #455a64; font: 15px/30px "Inter", sans-serif; text-align: center; }
.share { width: 67px; height: 40px; margin-left: 10px; background: #0d99ff; color: #fff; border-radius: 6px; font: 600 14px "Inter", sans-serif; }
.dev-toggle { width: 60px; height: 40px; margin-left: 10px; border-radius: 20px; background: #444; padding: 5px; }
.dev-knob { display: block; width: 30px; height: 30px; border-radius: 50%; background: #757575; font: 13px/30px "Inter", sans-serif; text-align: center; }
.play-ic { width: 15px; height: 21px; margin-left: 31px; }
.play-ic + .tchev { margin-left: 9px; }
.zoom-val { font: 14px "Inter", sans-serif; margin-left: 20px; }
.zoom-val + .tchev { margin-left: 5px; }

/* Main */
.main { height: 851px; flex: none; display: flex; position: relative; overflow: hidden; }

/* Layers */
.left { width: 301px; flex: none; background: #fff; color: #333; font-size: 14px; }
.left-head { height: 50px; border-bottom: 1px solid #e6e6e6; display: flex; align-items: center; padding-left: 22px; }
.ic16 { width: 16px; height: 16px; flex: none; }
.lh-active { margin-left: 12px; font-weight: 600; color: #333; }
.lh-muted { margin-left: 19px; color: #999; }
.lh-page { margin-left: 61px; color: #666; }
.pchev { width: 9px; height: 6px; color: #aaa; margin-left: 6px; flex: none; }
.row { height: 40px; display: flex; align-items: center; padding-left: 20px; position: relative; white-space: nowrap; color: #333; }
.row.sel { background: #e5f4ff; }
.row.nested { padding-left: 50px; }
.row.strong { font-weight: 600; }
.row.hid { color: #b8b8b8; }
.lic { width: 20px; height: 20px; margin-right: 10px; flex: none; }
.eye-off { width: 18px; height: 10px; margin: 3px 17px 0 auto; flex: none; }

/* Canvas */
.canvas { width: 1319px; flex: none; background: #373634; position: relative; overflow: hidden; font-family: "Open Sans", "Noto Sans", sans-serif; }
.c-blue { position: absolute; left: 144px; top: 2px; width: 1023px; height: 2px; background: #0d8ce9; }
.c-rule { position: absolute; left: 70px; top: 30px; width: 1182px; height: 2px; background: #cfcfcf; }
.c-modes { position: absolute; left: 339px; top: 79px; display: flex; gap: 76px; }
.c-mode { width: 159px; height: 49px; border: 4px solid #d9d9d9; color: #fff; font-size: 19.5px; display: flex; align-items: center; justify-content: center; padding: 0 0 2px 6px; }
.c-ring { position: absolute; left: 421px; top: 176px; width: 464px; height: 464px; border: 7px solid #dcdcdc; border-radius: 50%; }
.c-time { position: absolute; left: 422px; width: 466px; top: 352px; text-align: center; color: #fff; font-size: 52px; line-height: 72px; }
.c-play { position: absolute; left: 605px; top: 680px; width: 31px; height: 31px; }
.c-repeat { position: absolute; left: 668px; top: 681px; width: 33px; height: 30px; }
.c-input { position: absolute; left: 201px; top: 764px; width: 373px; height: 33px; border-radius: 16.5px; background: #d9d9d9; color: #6b6b6b; font-size: 17px; line-height: 37px; padding-left: 24px; }
.c-now { position: absolute; left: 733px; top: 764px; width: 373px; height: 33px; border-radius: 16.5px; border: 1.500px solid #ddd; color: #fff; font-size: 18.4px; display: flex; align-items: center; padding: 0 0 2px 10px; }
.c-now-dot { width: 14px; height: 14px; border: 2.500px solid #dcdcdc; border-radius: 50%; margin-right: 26px; flex: none; }
.c-vscroll { position: absolute; left: 1303px; top: 354px; width: 10px; height: 441px; background: #252424; border: 2px solid #666; border-radius: 5px; }
.c-hscroll { position: absolute; left: 5px; top: 837px; width: 1132px; height: 10px; background: #252424; border: 2px solid #666; border-radius: 5px; }

/* Properties */
.right { flex: 1; background: #fff; position: relative; color: #333; font-size: 14px; overflow: hidden; }
.sec { border-bottom: 1px solid #e6e6e6; padding: 0 0 0 20px; }
.sec-head { height: 101px; }
.rt-tabs { height: 50px; display: flex; align-items: center; padding-bottom: 2px; }
.rt-active { font-weight: 600; color: #222; }
.rt-muted { color: #999; margin-left: 19px; }
.aligns { display: flex; align-items: center; margin-left: -11px; height: 38px; }
.al { width: 20px; height: 20px; margin: 0 10px; flex: none; }
.aligns .al:nth-of-type(7) { margin-right: 3px; margin-left: 5px; }
.al-chev { margin-left: 0; }
.sec-geo { height: 141px; padding-top: 10px; padding-bottom: 10px; }
.sec-pad { height: 101px; padding-top: 10px; padding-bottom: 10px; }
.sec-text { height: 261px; padding-top: 10px; }
.sec-one { height: 61px; padding-top: 10px; }
.sec-last { padding: 22px 0 0 262px; color: #888; }
.pr { display: grid; grid-template-columns: 30px 90px 30px 70px 19px 22px; align-items: center; height: 40px; padding-bottom: 2px; }
.pr svg { display: block; }
.pr-title { height: 40px; display: flex; align-items: center; position: relative; padding: 0 25px 2px 0; }
.pr-font-name { padding-bottom: 3px; }
.pr-title strong { font-weight: 600; color: #222; }
.pr-title.muted { color: #888; font-weight: 500; justify-content: space-between; padding-right: 22px; }
.pr-title .ic-dots { margin-left: auto; margin-right: 0; }
.lbl { width: 20px; text-align: center; color: #999; }
.ic-con { width: 10px; height: 18px; justify-self: center; }
.ic-ang { width: 12px; height: 12px; margin-left: 3px; }
.ic-drop { width: 12px; height: 14px; margin-left: 4px; }
.span-blend { display: flex; align-items: center; white-space: nowrap; }
.blend-chev { margin-left: 5px; }
.pct-layer { grid-column: 3 / 5; margin-left: 59px; color: #444; }
.eye-layer { grid-column: 6; margin-left: 2px; }
.ic-eye { width: 18px; height: 12px; }
.ic-dots { width: 12px; height: 12px; fill: #222; flex: none; }
.ic-plus { width: 15px; height: 15px; flex: none; color: #333; position: relative; }
.ic-plus.grey { color: #888; }
.title-tools { margin-left: auto; margin-right: -3px; display: flex; align-items: center; gap: 26.5px; }
.title-tools .ic-dots { margin-left: 0; }
.pr-font { grid-template-columns: 150px 70px; }
.font-wt { display: flex; align-items: center; }
.ic18 { width: 18px; height: 18px; }
.ic14 { width: 14px; height: 14px; display: block; }
.ic18[viewBox="0 0 18 12"] { height: 12px; }
.ic-ls { color: #888; letter-spacing: 2px; font-size: 14px; }
.resize-first { margin-bottom: 2px; }
.resize-group { grid-column: 4 / 7; display: flex; align-items: center; gap: 7px; margin: 0 0 2px 0; }
.toggle-on { width: 30px; height: 30px; border-radius: 2px; background: #e5e5e5; display: flex; align-items: center; justify-content: center; }
.pr-aligns { display: flex; align-items: center; height: 36px; margin-left: -5px; }
.cell { width: 30px; height: 30px; display: flex; align-items: center; justify-content: center; border-radius: 2px; flex: none; }
.cell.on { background: #e5e5e5; }
.cell-gap { width: 30px; flex: none; }
.ic-more { width: 18px; height: 4px; margin-left: 36px; fill: #222; }
.pr-fill { grid-template-columns: 30px 91px 80px 20px 22px; }
.swatch { width: 20px; height: 20px; background: #fff; border: 1px solid #e6e6e6; }
.fill-pct { color: #333; }
.ic-minus { width: 14px; height: 2px; margin-left: 22px; }
.sec-last .ic-plus { display: block; }
.help { position: absolute; left: 240px; top: 792px; width: 40px; height: 40px; border-radius: 50%; background: #222; color: #fff; font-size: 20px; line-height: 40px; text-align: center; font-weight: 300; }

/* Taskbar */
.taskbar { height: 60px; flex: none; background: linear-gradient(90deg, #e4eef8 0%, #d9e4f6 50%, #dfe8f6 70%, #e5eef7 100%); border-top: 1px solid #b8c4d2; display: flex; align-items: center; font-family: "Open Sans", "Noto Sans", sans-serif; color: #1b1b1b; }
.tk-left { width: 493px; flex: none; display: flex; align-items: center; padding-left: 25px; }
.weather { width: 30px; height: 28px; flex: none; }
.weather-t { display: flex; flex-direction: column; margin: 0 0 2px 10px; font-size: 14px; line-height: 20px; }
.w2 { color: #444; }
.winlogo { width: 29px; height: 29px; flex: none; margin-right: 18px; }
.tk-search { width: 273px; height: 39px; flex: none; border-radius: 20px; background: #f1f5fd; border: 1px solid #c9d3e4; display: flex; align-items: center; padding-left: 14px; }
.s-ic { width: 20px; height: 22px; flex: none; }
.s-t { margin-left: 11px; font-size: 16px; color: #444; }
.s-flower { width: 60px; height: 36px; margin-left: auto; margin-right: 2px; flex: none; }
.apps { display: flex; margin-left: 1.400px; flex: none; }
.app { position: relative; width: 55.200px; height: 48px; display: flex; align-items: center; justify-content: center; flex: none; }
.ic-app { width: 30px; height: 30px; display: block; }
.svg-t { font-family: "Liberation Sans", sans-serif; font-weight: 700; text-anchor: middle; }
.teams-t { font-size: 12px; fill: #5059c9; }
.amz { width: 28px; height: 32px; background: #f4f4f4; font: 700 30px/26px "Liberation Sans", sans-serif; color: #555; text-align: center; display: block; position: relative; }
.amz-dots { position: absolute; left: 4px; right: 4px; bottom: 2px; height: 4px; background: linear-gradient(90deg, #e23 25%, #3a3 25%, #3a3 50%, #fb0 50%, #fb0 75%, #28d 75%); border-radius: 2px; }
.app-act::before { content: ""; position: absolute; left: 3px; right: 4px; top: 0; bottom: 0; background: #eef3fb; border-radius: 5px; box-shadow: 0 0 0 1px #e3e9f4; }
.app-act > * { position: relative; }
.dot { position: absolute; left: 50%; bottom: -2px; width: 7px; height: 6px; margin-left: -3.500px; border-radius: 3px; background: #7a7a7a; }
.bar { position: absolute !important; left: 50%; bottom: -2px; width: 20px; height: 4px; margin-left: -11px; border-radius: 2px; background: #0a7ad4; }
.badge { position: absolute; left: 28px; top: 1px; width: 24px; height: 24px; border-radius: 50%; background: #0b78d3; color: #fff; font-size: 13px; line-height: 24px; text-align: center; }
.g-over { position: absolute !important; left: 27px; top: 3px; width: 22px; height: 22px; border-radius: 50%; background: #455a64; color: #ddd; font-size: 12px; line-height: 22px; text-align: center; font-weight: 600; }
.tray { display: flex; align-items: center; margin-left: 75.400px; flex: none; }
.tr-caret { width: 14px; height: 8px; margin: 0 9px; flex: none; }
.tr-cloud { width: 22px; height: 24px; margin-left: 13px; flex: none; }
.tr-lang { width: 48px; margin-left: 13px; display: flex; flex-direction: column; align-items: center; font-size: 14px; line-height: 20px; }
.tr-ic { height: 20px; width: 22px; flex: none; }
.tr-wifi { margin-left: 12px; }
.tr-vol { margin-left: 8px; }
.tr-bat { margin-left: 7px; }
.tr-clock { width: 92px; margin-left: 4px; display: flex; flex-direction: column; align-items: flex-end; font-size: 14.500px; line-height: 20px; flex: none; }
.tr-bell { width: 16px; height: 22px; margin-left: 13px; flex: none; }
.tr-copilot { position: relative; width: 30px; height: 34px; margin-left: 21px; flex: none; }
.pre { position: absolute; left: 7px; bottom: -2px; width: 22px; height: 13px; background: #f7c948; color: #222; font: 700 10px/13px "Liberation Sans", sans-serif; text-align: center; border-radius: 2px; }
```
